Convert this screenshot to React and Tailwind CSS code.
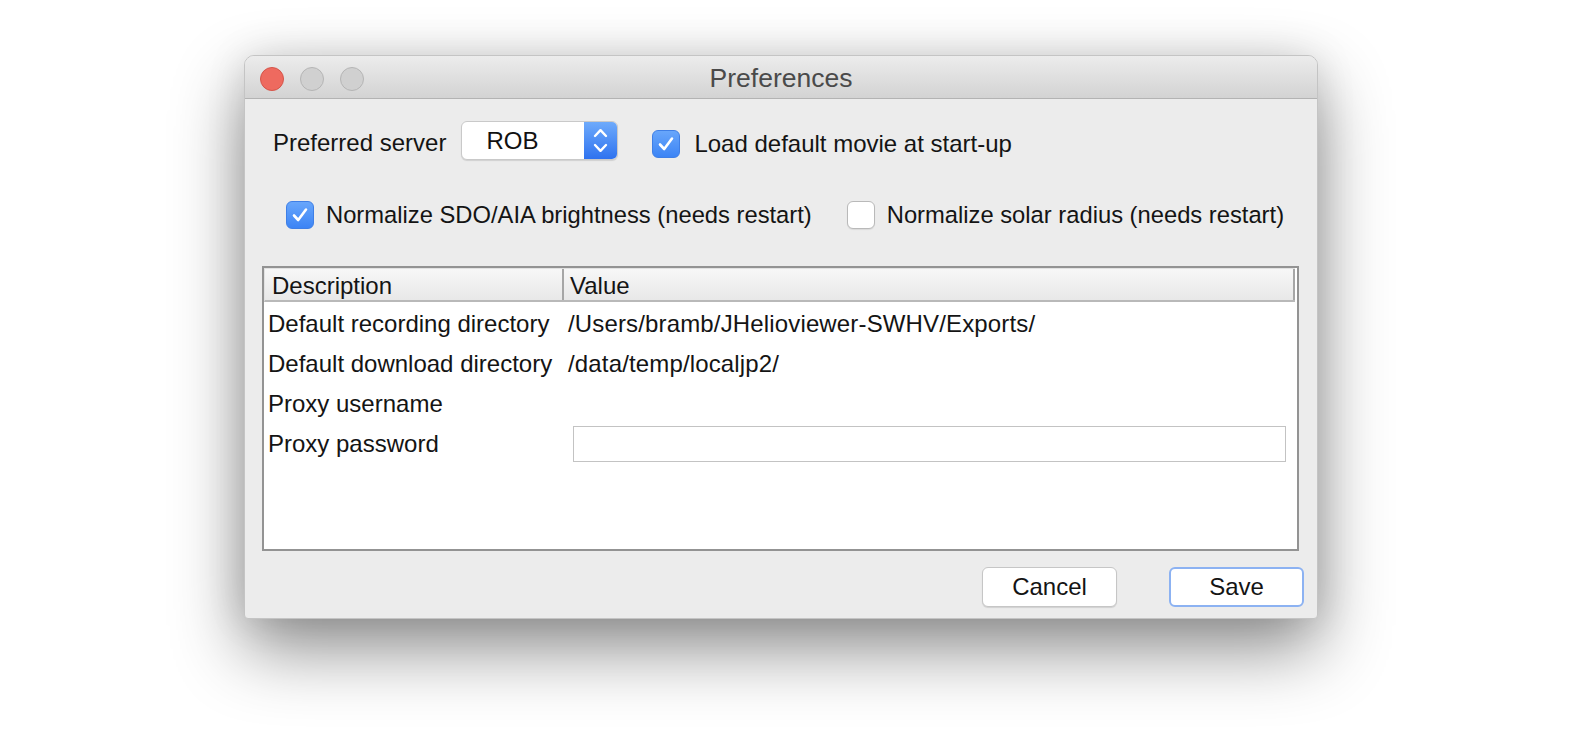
import React from "react";

function CheckBox({ checked }) {
  if (!checked) {
    return (
      <div className="w-[28px] h-[28px] shrink-0 rounded-[6px] bg-white border border-[#b9b9b9] shadow-[0_1px_1px_rgba(0,0,0,0.08)]" />
    );
  }
  return (
    <div className="w-[28px] h-[28px] shrink-0 rounded-[6px] bg-linear-to-b from-[#68a6fb] to-[#3c84f5] border border-[#3f7fe6] flex items-center justify-center">
      <svg width="20" height="20" viewBox="0 0 20 20">
        <path d="M4 10.5 L8.2 15 L16 4.5" fill="none" stroke="white" strokeWidth="2.6" strokeLinecap="round" strokeLinejoin="round" />
      </svg>
    </div>
  );
}

function Select() {
  return (
    <div className="ml-[15px] w-[157px] h-[39px] flex rounded-[6px] border border-[#c9c9c9] bg-white shadow-[0_1px_1px_rgba(0,0,0,0.12)] overflow-hidden">
      <div className="flex-1 flex items-center pl-[24px] text-[24px] text-[#111]">ROB</div>
      <div className="w-[33px] h-full bg-linear-to-b from-[#6eaafb] to-[#2f72ef] flex flex-col items-center justify-center gap-[5px]">
        <svg width="15" height="10" viewBox="0 0 15 10">
          <path d="M2 8 L7.5 2.2 L13 8" fill="none" stroke="white" strokeWidth="2.4" strokeLinecap="round" strokeLinejoin="round" />
        </svg>
        <svg width="15" height="10" viewBox="0 0 15 10">
          <path d="M2 2 L7.5 7.8 L13 2" fill="none" stroke="white" strokeWidth="2.4" strokeLinecap="round" strokeLinejoin="round" />
        </svg>
      </div>
    </div>
  );
}

const rows = [
  ["Default recording directory", "/Users/bramb/JHelioviewer-SWHV/Exports/"],
  ["Default download directory", "/data/temp/localjp2/"],
  ["Proxy username", ""],
  ["Proxy password", null],
];

export default function App() {
  return (
    <div
      className="w-[1588px] h-[755px] bg-white overflow-hidden pt-[55px] pl-[244px] text-[#141414]"
      style={{ fontFamily: '"Liberation Sans", Arial, Helvetica, sans-serif' }}
    >
      <div className="w-[1074px] h-[564px] flex flex-col rounded-t-[10px] rounded-b-[4px] border border-[#c4c4c4] bg-[#ececec] overflow-hidden shadow-[0_30px_70px_rgba(0,0,0,0.45),0_0_40px_rgba(0,0,0,0.10)]">
        {/* Title bar */}
        <div className="relative h-[43px] shrink-0 flex items-center pt-[3px] pl-[15px] gap-[16px] bg-linear-to-b from-[#ececec] to-[#d3d3d3] border-b border-[#b3b3b3]">
          <div className="w-[24px] h-[24px] rounded-full bg-[#ee6a5f] border border-[#d5554a]" />
          <div className="w-[24px] h-[24px] rounded-full bg-[#d0d0d0] border border-[#b5b5b5]" />
          <div className="w-[24px] h-[24px] rounded-full bg-[#d0d0d0] border border-[#b5b5b5]" />
          <div className="absolute inset-0 pt-[3px] flex items-center justify-center text-[26.5px] text-[#4a4a4a] pointer-events-none">
            Preferences
          </div>
        </div>

        {/* Body */}
        <div className="flex-1 flex flex-col">
          {/* Row 1 */}
          <div className="flex items-center h-[39px] mt-[22px] pl-[28px] text-[24px]">
            <span className="mt-[5px]">Preferred server</span>
            <Select />
            <div className="ml-[34px] mt-[6px]">
              <CheckBox checked />
            </div>
            <span className="ml-[14px] mt-[6px]">Load default movie at start-up</span>
          </div>

          {/* Row 2 */}
          <div className="flex items-center h-[29px] mt-[40px] pl-[41px] text-[23.75px]">
            <CheckBox checked />
            <span className="ml-[12px]">Normalize SDO/AIA brightness (needs restart)</span>
            <div className="ml-[35px]">
              <CheckBox checked={false} />
            </div>
            <span className="ml-[12px]">Normalize solar radius (needs restart)</span>
          </div>

          {/* Table */}
          <div className="mt-[37px] ml-[17px] mr-[18px] h-[285px] border-2 border-[#939393] bg-white flex flex-col text-[24px]">
            <div className="h-[34px] shrink-0 mr-[2px] flex border-t border-l border-[#e2e2e2] border-b-2 border-b-[#b9b9b9] bg-linear-to-b from-[#f7f7f7] to-[#e8e8e8]">
              <div className="w-[299px] border-r-2 border-[#a6a6a6] flex items-center pt-[2px] pl-[7px]">Description</div>
              <div className="flex-1 flex items-center pt-[2px] pl-[6px] border-r-2 border-[#a6a6a6]">Value</div>
            </div>
            <div className="flex flex-col mt-[2px]">
              {rows.map(([d, v]) => (
                <div key={d} className="h-[40px] flex items-center">
                  <div className="w-[302px] pl-[4px] whitespace-nowrap">{d}</div>
                  {v === null ? (
                    <div className="flex-1 pl-[7px] pr-[11px] flex items-center">
                      <div className="w-full h-[36px] border border-[#c3c3c3] bg-white" />
                    </div>
                  ) : (
                    <div className="flex-1 pl-[2px] whitespace-nowrap tracking-[0.15px]">{v}</div>
                  )}
                </div>
              ))}
            </div>
          </div>

          {/* Buttons */}
          <div className="flex justify-end gap-[52px] pr-[13px] mt-[16px] text-[24px]">
            <div className="w-[135px] h-[40px] rounded-[6px] bg-white border border-[#c6c6c6] shadow-[0_1px_1px_rgba(0,0,0,0.12)] flex items-center justify-center">
              Cancel
            </div>
            <div className="w-[135px] h-[40px] rounded-[6px] bg-white border-2 border-[#8cb2f2] flex items-center justify-center">
              Save
            </div>
          </div>
        </div>
      </div>
    </div>
  );
}
